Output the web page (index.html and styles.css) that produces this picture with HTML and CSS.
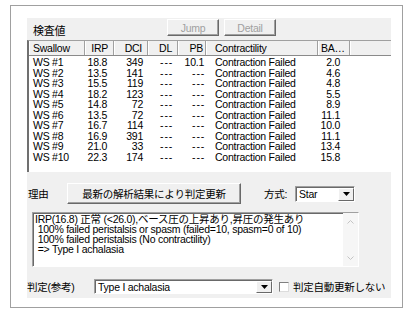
FILE: index.html
```html
<!DOCTYPE html>
<html lang="ja">
<head>
  <meta charset="UTF-8">
  <title>検査値</title>
  <link rel="stylesheet" href="styles.css">
</head>
<body>

<div class="frame">
  <div class="panel">

    <div class="top">
      <span class="title">検査値</span>
      <button class="btn off">Jump</button>
      <button class="btn off detail">Detail</button>
    </div>

    <div class="list">
      <div class="row head">
        <span class="l">Swallow</span>
        <span class="r">IRP</span>
        <span class="r">DCI</span>
        <span class="r">DL</span>
        <span class="r">PB</span>
        <span class="l">Contractility</span>
        <span class="l">BA…</span>
        <span></span>
      </div>
      <div class="row"><span class="l">WS #1</span><span class="r">18.8</span><span class="r">349</span><span class="r na">---</span><span class="r">10.1</span><span class="l">Contraction Failed</span><span class="r">2.0</span><span></span></div>
      <div class="row"><span class="l">WS #2</span><span class="r">13.5</span><span class="r">141</span><span class="r na">---</span><span class="r na">---</span><span class="l">Contraction Failed</span><span class="r">4.6</span><span></span></div>
      <div class="row"><span class="l">WS #3</span><span class="r">15.5</span><span class="r">119</span><span class="r na">---</span><span class="r na">---</span><span class="l">Contraction Failed</span><span class="r">4.8</span><span></span></div>
      <div class="row"><span class="l">WS #4</span><span class="r">18.2</span><span class="r">123</span><span class="r na">---</span><span class="r na">---</span><span class="l">Contraction Failed</span><span class="r">5.5</span><span></span></div>
      <div class="row"><span class="l">WS #5</span><span class="r">14.8</span><span class="r">72</span><span class="r na">---</span><span class="r na">---</span><span class="l">Contraction Failed</span><span class="r">8.9</span><span></span></div>
      <div class="row"><span class="l">WS #6</span><span class="r">13.5</span><span class="r">72</span><span class="r na">---</span><span class="r na">---</span><span class="l">Contraction Failed</span><span class="r">11.1</span><span></span></div>
      <div class="row"><span class="l">WS #7</span><span class="r">16.7</span><span class="r">114</span><span class="r na">---</span><span class="r na">---</span><span class="l">Contraction Failed</span><span class="r">10.0</span><span></span></div>
      <div class="row"><span class="l">WS #8</span><span class="r">16.9</span><span class="r">391</span><span class="r na">---</span><span class="r na">---</span><span class="l">Contraction Failed</span><span class="r">11.1</span><span></span></div>
      <div class="row"><span class="l">WS #9</span><span class="r">21.0</span><span class="r">33</span><span class="r na">---</span><span class="r na">---</span><span class="l">Contraction Failed</span><span class="r">13.4</span><span></span></div>
      <div class="row"><span class="l">WS #10</span><span class="r">22.3</span><span class="r">174</span><span class="r na">---</span><span class="r na">---</span><span class="l">Contraction Failed</span><span class="r">15.8</span><span></span></div>
    </div>

    <div class="reason">
      <span class="label">理由</span>
      <button class="btn update">最新の解析結果により判定更新</button>
      <span class="method">方式:</span>
      <div class="combo star">
        <span class="value">Star</span>
        <span class="drop"><svg width="7" height="4"><path d="M0 0h7L3.5 4z" fill="#000"/></svg></span>
      </div>
    </div>

    <div class="memo">
      <div class="memo-text">IRP(16.8) 正常 (&lt;26.0),ベース圧の上昇あり,昇圧の発生あり
 100% failed peristalsis or spasm (failed=10, spasm=0 of 10)
 100% failed peristalsis (No contractility)
 =&gt; Type I achalasia</div>
      <div class="scroll">
        <svg width="7" height="4"><path d="M0.5 3.5L3.5 0.5L6.5 3.5" fill="none" stroke="#c4c4c4"/></svg>
        <svg width="7" height="4"><path d="M0.5 0.5L3.5 3.5L6.5 0.5" fill="none" stroke="#c4c4c4"/></svg>
      </div>
    </div>

    <div class="judge">
      <span class="label">判定(参考)</span>
      <div class="combo type">
        <span class="value">Type I achalasia</span>
        <span class="drop"><svg width="7" height="4"><path d="M0 0h7L3.5 4z" fill="#000"/></svg></span>
      </div>
      <span class="check"></span>
      <span class="check-label">判定自動更新しない</span>
    </div>

  </div>
</div>

</body>
</html>
```

FILE: styles.css
```css
body {
  margin: 0;
  background: #fff;
  color: #000;
  font-family: "Liberation Sans", "Noto Sans CJK JP", sans-serif;
  font-size: 10.5px;
  letter-spacing: -0.25px;
}

.frame {
  box-sizing: border-box;
  width: 393px;
  height: 303px;
  margin: 5px 0 0 10px;
  padding: 12px 11px 0 16px;
  border: 1px solid #a0a0a0;
}

.panel {
  height: 280px;
  background: #f0f0f0;
  display: flex;
  flex-direction: column;
}

/* buttons */
.btn {
  box-sizing: border-box;
  margin: 0;
  padding: 0;
  font: inherit;
  letter-spacing: inherit;
  color: #000;
  background: #f0f0f0;
  border: 1px solid;
  border-color: #fff #696969 #696969 #fff;
  box-shadow: inset -1px -1px 0 #a0a0a0;
}
.btn.off { color: #a0a0a0; width: 52px; height: 17px; margin-top: 1px; }
.btn.detail { margin-left: 5px; }

/* top row */
.top { height: 22px; display: flex; align-items: flex-start; }
.title {
  box-sizing: border-box;
  width: 140px;
  padding: 4px 0 0 6px;
  line-height: 18px;
  font-size: 11px;
}

/* list view */
.list {
  height: 132px;
  box-sizing: border-box;
  background: #fff;
  border-top: 1px solid #a0a0a0;
  border-left: 2px solid #707070;
  overflow: hidden;
}
.row {
  display: grid;
  grid-template-columns: 56px 29px 34px 30px 28px 112px 32px 1fr;
  height: 10.5px;
  line-height: 10.5px;
  white-space: nowrap;
}
.row span { overflow: hidden; }
.row .l { padding-left: 4px; }
.row .r { text-align: right; padding-right: 5px; }
.row span:nth-child(2) { padding-right: 7px; }
.row span:nth-child(5) { padding-right: 2px; }
.row span:nth-child(6) { padding-left: 9px; }
.row span:nth-child(7) { padding-right: 10px; }
.row .na { letter-spacing: 0.8px; }
.row span.na:nth-child(4) { padding-right: 5px; }
.row span.na:nth-child(5) { padding-right: 1px; }

.row.head {
  height: 14px;
  line-height: 14px;
  margin-bottom: 1px;
  background: #f0f0f0;
  border-bottom: 1px solid #8a8a8a;
}
.row.head span {
  border-right: 1px solid #a0a0a0;
  box-shadow: inset 1px 0 0 #fff;
}
.row.head span:nth-child(7) { padding-left: 3px; padding-right: 0; }
.row.head span:nth-child(2) { padding-right: 5px; }
.row.head span:last-child { border-right: none; }

/* reason row */
.reason { height: 21px; margin-top: 11px; display: flex; align-items: center; }
.label { box-sizing: border-box; width: 40px; padding-left: 1px; }
.btn.update { width: 174px; height: 21px; }
.method { width: 31px; margin-left: 23px; }

/* combo boxes */
.combo {
  box-sizing: border-box;
  height: 16px;
  display: flex;
  background: #fff;
  border: 1px solid;
  border-color: #a0a0a0 #fff #fff #a0a0a0;
  box-shadow: inset 1px 1px 0 #696969;
}
.combo .value { flex: 1; padding: 1px 0 0 3px; line-height: 13px; }
.combo .drop {
  box-sizing: border-box;
  width: 16px;
  margin: 1px 0 0 0;
  display: flex;
  align-items: center;
  justify-content: center;
  background: #f0f0f0;
  border: 1px solid;
  border-color: #fff #696969 #696969 #fff;
}
.combo.star { width: 60px; }
.combo.type { width: 179px; height: 15px; }
.combo.type .value { line-height: 12px; }

/* memo */
.memo {
  box-sizing: border-box;
  width: 327px;
  height: 55px;
  margin: 8px 0 0 5px;
  display: flex;
  background: #fff;
  border: 1px solid;
  border-color: #a0a0a0 #fff #fff #a0a0a0;
  box-shadow: inset 1px 1px 0 #696969;
}
.memo-text {
  flex: 1;
  padding: 1px 0 0 2px;
  line-height: 10px;
  white-space: pre;
  overflow: hidden;
}
.scroll {
  width: 15px;
  background: #f6f6f6;
  display: flex;
  flex-direction: column;
  align-items: center;
  justify-content: space-between;
  padding: 7px 0 6px;
  box-sizing: border-box;
}

/* judge row */
.judge { height: 15px; margin-top: 12px; display: flex; align-items: center; }
.judge .label { width: 67px; padding-left: 0; }
.check {
  box-sizing: border-box;
  width: 10px;
  height: 10px;
  margin: 0 4px 0 6px;
  background: #fff;
  border: 1px solid;
  border-color: #808080 #dcdcdc #dcdcdc #808080;
}
```
